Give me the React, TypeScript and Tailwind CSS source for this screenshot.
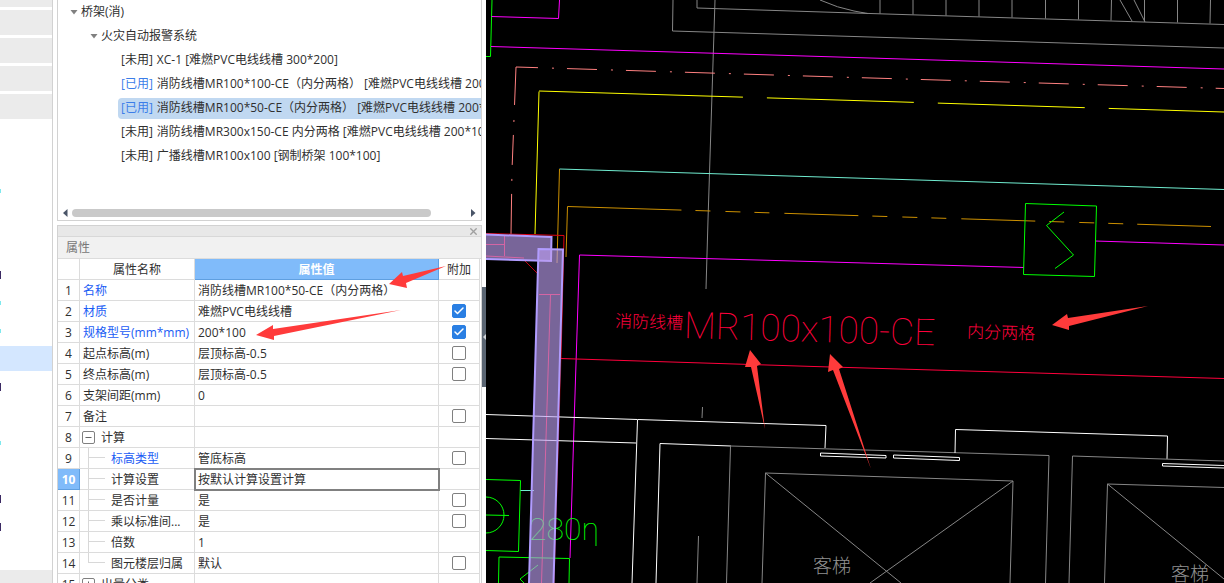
import { useState } from "react";
import { Check, Minus, Plus, X } from "lucide-react";

interface TreeLeaf {
  used: boolean;
  name: string;
}

interface PropertyRow {
  id: number;
  name: string;
  value?: string;
  link?: boolean;
  extra?: boolean;
  group?: "open" | "closed";
  child?: "middle" | "last";
}

interface Stroke {
  d: string;
  color: string;
  dash?: string;
  offset?: number;
}

const SIDE_ROWS = [
  "gray", "gray", "gray", "gray", "", "", "teal", "", "", "navy", "teal",
  "teal", "selected", "navy", "", "teal", "", "navy", "navy", "", "gray",
];

const SIDE_STYLES: Record<string, string> = {
  gray: "bg-[#ebebeb]",
  selected: "bg-[#d4e7ff]",
};

const DOT_STYLES: Record<string, string> = {
  teal: "h-1 bg-[#7fe9ee]",
  navy: "h-2 bg-[#3b2a63]",
};

const LEAVES: TreeLeaf[] = [
  { used: false, name: "XC-1 [难燃PVC电线线槽 300*200]" },
  { used: true, name: "消防线槽MR100*100-CE（内分两格） [难燃PVC电线线槽 200*100]" },
  { used: true, name: "消防线槽MR100*50-CE（内分两格） [难燃PVC电线线槽 200*100]" },
  { used: false, name: "消防线槽MR300x150-CE 内分两格 [难燃PVC电线线槽 200*100]" },
  { used: false, name: "广播线槽MR100x100 [钢制桥架 100*100]" },
];

const PROPERTIES: PropertyRow[] = [
  { id: 1, name: "名称", value: "消防线槽MR100*50-CE（内分两格）", link: true },
  { id: 2, name: "材质", value: "难燃PVC电线线槽", link: true, extra: true },
  { id: 3, name: "规格型号(mm*mm)", value: "200*100", link: true, extra: true },
  { id: 4, name: "起点标高(m)", value: "层顶标高-0.5", extra: false },
  { id: 5, name: "终点标高(m)", value: "层顶标高-0.5", extra: false },
  { id: 6, name: "支架间距(mm)", value: "0" },
  { id: 7, name: "备注", extra: false },
  { id: 8, name: "计算", group: "open" },
  { id: 9, name: "标高类型", value: "管底标高", link: true, extra: false, child: "middle" },
  { id: 10, name: "计算设置", value: "按默认计算设置计算", child: "middle" },
  { id: 11, name: "是否计量", value: "是", extra: false, child: "middle" },
  { id: 12, name: "乘以标准间...", value: "是", extra: false, child: "middle" },
  { id: 13, name: "倍数", value: "1", child: "middle" },
  { id: 14, name: "图元楼层归属", value: "默认", extra: false, child: "last" },
  { id: 15, name: "出量分类", group: "closed" },
];

const GRAY = "#868686";
const GREEN = "#00ff00";
const MAGENTA = "#ff00ff";
const CRIMSON = "#ff003c";
const ORANGE = "#cc9000";
const SALMON = "#ff8080";
const TEAL = "#70ecd0";
const WHITE = "#ffffff";

// Everything that lies under the selected tray
const BASE_STROKES: Stroke[] = [
  { d: "M673 0L672.5 31L854 36.5L1224 48", color: GRAY },
  { d: "M697 0V8L854 13L1224 24.5", color: GRAY },
  { d: "M820 0Q838 8 854 11T868 13.5", color: GRAY },
  { d: "M880 0V13.5M913 0V14.5M946 0V15.5M979 0V16.5M1012 0V17.5M1045.5 0V18.5M1078.5 0V19.5M1111.5 0L1111 20.5M1144.5 0V21.5M1177.5 0V22.5M1210.5 0L1210 23.5", color: GRAY },
  { d: "M1120 0L1132 21M1134 0L1145 22", color: GRAY },
  { d: "M715 0L708 220L706 289M702.5 407L702 418M698.5 536L697 583", color: GRAY },
  { d: "M492 0L490.5 56.5H486", color: GREEN },
  { d: "M491.5 16.5L558.5 18.5L559.5 0", color: MAGENTA },
  { d: "M491 46.5L854 57.5L1224 69", color: MAGENTA },
  { d: "M516 67L854 77.5L1224 88.5", color: SALMON, dash: "30 14 2 13", offset: 8 },
  { d: "M516 67L514.5 106L512 170L511 234", color: SALMON, dash: "38 15 2 13 30 14 2 13 60" },
  { d: "M539 91.5L535 234", color: "#ffff00" },
  { d: "M539 91L854 100.5L1224 112", color: "#ffff00", dash: "204 24 147 24 147 24 200" },
  { d: "M559.5 169L854 178L1224 189.5", color: TEAL },
  { d: "M559.5 169L557 263M567.5 206.5L566 257", color: ORANGE },
  { d: "M567.5 206.5L854 215.5L1211 226.5", color: ORANGE, dash: "114 14 15 15 15 14 15 15 74 14 15 15 15 14 15 15 74 14 15 15 15 14 15 14 74" },
  { d: "M1024 267.5L579.5 255L574.5 410L570 558M1095 241L1224 245", color: MAGENTA },
  { d: "M1025.5 203.5L1096.5 206L1094.5 276.5L1023.5 274.5Z", color: GREEN },
  { d: "M1064 212L1046.5 225.5L1073.5 255L1055 268.5", color: GREEN },
  { d: "M486 233.5L564 235.5L561 358", color: "#e00010" },
  { d: "M561 358L554 583", color: "#800010" },
  { d: "M525 261L537 273", color: "#c00010" },
  { d: "M486 244.5H504.5M504.5 236V256M486 256L524 258M539 294.5H560M550.5 294L541.5 583", color: "#ff0020" },
  { d: "M560.5 358.5L814 366.5L1224 378.5", color: CRIMSON },
  { d: "M486 414.5L637.5 419.5L826 425.5L825 448", color: WHITE },
  { d: "M486 438.5L636 443M637.5 420L632 583", color: WHITE },
  { d: "M731 446L660 443.5L656 583", color: WHITE },
  { d: "M731 446L1049 455.5L1045.5 583M730.5 446L726.5 583", color: GRAY },
  { d: "M820.5 453L886 455.5V458L820.5 456ZM893.5 455L959.5 457.5V460.5L893.5 458Z", color: WHITE },
  { d: "M762 583L765.5 473L1013 481L1010 583M765.5 473L901 583M1013 481L870 583", color: GRAY },
  { d: "M955 453L955.5 429.5L1167.5 436L1167 459", color: WHITE },
  { d: "M1224 461L1072.5 456L1069 583", color: GRAY },
  { d: "M1224 465.5L1162.5 463.5V466L1224 468", color: WHITE },
  { d: "M1224 487.5L1107.5 484L1104.5 583M1107.5 484L1224 579", color: GRAY },
  { d: "M486 479.5L520.5 480.5L518.5 551.5L486 550.5", color: GREEN },
  { d: "M486 497A18 18 0 0 1 486 533M486 515L509 515.5", color: GREEN },
  { d: "M520.5 490.5H534", color: TEAL },
  { d: "M498.5 583L499 557L569.5 558.5L569 583M538 565L520 579L524 583", color: GREEN },
];

const TRAY = [
  "M486 234.5L551.5 237L551 261L486 259",
  "M529 583L538.5 249L563 249.5L553.5 583",
];

const CANVAS_ARROWS = [
  "750,350 761,364 757,366 765,429 751,367 745,367",
  "830,354 843,367 839,369 871,469 833,370 828,372",
  "1052,325 1067,314 1068,318 1148,306 1069,326 1069,330",
];

const PANEL_ARROWS = [
  "389,284 402,272 403,276 446,266 406,283 407,288",
  "256,335 273,325 273,329 401,310 274,336 274,340",
];

export default function App() {
  return (
    <div className="relative flex h-screen min-w-0 overflow-hidden bg-white font-['Open_Sans','Noto_Sans_CJK_SC',sans-serif] text-xs text-[#2f2f2f]">
      <SideList />
      <div className="ml-1 flex w-[425px] shrink-0 flex-col">
        <ComponentTree />
        <PropertyPanel />
      </div>
      <Splitter />
      <DrawingCanvas />
      <svg className="pointer-events-none absolute inset-0 h-full w-[482px]" aria-hidden="true">
        {PANEL_ARROWS.map((points) => (
          <polygon key={points} points={points} fill="#ff3b3b" />
        ))}
      </svg>
    </div>
  );
}

function SideList() {
  return (
    <aside className="flex w-[53px] shrink-0 flex-col gap-[3px] overflow-hidden border-r border-[#d2d2d2]">
      <div className="h-[7px] shrink-0 bg-[#ebebeb]" />
      {SIDE_ROWS.map((kind, i) => (
        <div key={i} className={`flex h-[25px] shrink-0 items-center ${SIDE_STYLES[kind] ?? ""}`}>
          {DOT_STYLES[kind] && <span className={`w-px ${DOT_STYLES[kind]}`} />}
        </div>
      ))}
    </aside>
  );
}

function ComponentTree() {
  const [selected, setSelected] = useState(2);

  return (
    <section className="flex h-[221px] shrink-0 flex-col border-x border-b border-[#d2d2d2]">
      <div className="flex-1 overflow-hidden">
        <div className="flex h-6 items-center gap-[3px] pl-3">
          <Caret />
          <span>桥架(消)</span>
        </div>
        <div className="flex h-6 items-center gap-[3px] pl-8">
          <Caret />
          <span>火灾自动报警系统</span>
        </div>
        <ul>
          {LEAVES.map((leaf, i) => (
            <li key={leaf.name} className="flex h-6 items-center pl-[60px]">
              <button
                type="button"
                onClick={() => setSelected(i)}
                className={`flex h-[21px] flex-1 items-center gap-1 overflow-hidden rounded-l-sm pl-[3px] whitespace-nowrap ${selected === i ? "bg-[#c0d8f1]" : ""}`}
              >
                <span className={leaf.used ? "text-[#3b7de9]" : ""}>{leaf.used ? "[已用]" : "[未用]"}</span>
                <span>{leaf.name}</span>
              </button>
            </li>
          ))}
        </ul>
      </div>
      <div className="flex h-[15px] shrink-0 items-center px-[5px]">
        <button type="button" aria-label="向左滚动" className="w-[9px]">
          <svg width="5" height="8" aria-hidden="true"><path d="M4.5 0V8L0 4Z" fill="#4a5568" /></svg>
        </button>
        <div className="flex-1">
          <div className="h-2 w-[90%] rounded-full bg-[#c9c9c9]" />
        </div>
        <button type="button" aria-label="向右滚动" className="w-[5px]">
          <svg width="5" height="8" aria-hidden="true"><path d="M0 0V8L4.5 4Z" fill="#4a5568" /></svg>
        </button>
      </div>
    </section>
  );
}

function Caret() {
  return (
    <svg width="8" height="5" aria-hidden="true" className="shrink-0">
      <path d="M0.5 0H7.5L4 4.5Z" fill="#808080" />
    </svg>
  );
}

function PropertyPanel() {
  return (
    <section className="mt-1 flex min-h-0 flex-1 flex-col overflow-hidden border-x border-t border-[#d2d2d2]">
      <div className="flex h-[11px] shrink-0 items-center justify-end border-b border-[#d8d8d8] bg-[#e8e8e8] pr-0.5">
        <button type="button" aria-label="关闭">
          <X size={11} strokeWidth={3} color="#a0a0a0" />
        </button>
      </div>
      <h2 className="flex h-[22px] shrink-0 items-center border-b border-[#dcdcdc] bg-[#f1f1f1] pl-2 text-[#777777]">属性</h2>
      <div className="pr-px">
        <table className="w-full table-fixed border-separate border-spacing-0">
          <colgroup>
            <col className="w-[22px]" />
            <col className="w-[115px]" />
            <col />
            <col className="w-[41px]" />
          </colgroup>
          <thead>
            <tr className="h-[21px]">
              <th className="border-r border-b border-[#dcdcdc] p-0" />
              <th className="border-r border-b border-[#dcdcdc] px-0 pt-0.5 pb-0 font-normal">属性名称</th>
              <th className="border-r border-b border-[#5f9fe0] bg-[#80bbfa] px-0 pt-0.5 pb-0 font-bold text-white">属性值</th>
              <th className="border-r border-b border-[#dcdcdc] px-0 pt-0.5 pb-0 font-normal">附加</th>
            </tr>
          </thead>
          <tbody>
            {PROPERTIES.map((row) => (
              <PropertyLine key={row.id} row={row} active={row.id === 10} />
            ))}
          </tbody>
        </table>
      </div>
    </section>
  );
}

function PropertyLine({ row, active }: { row: PropertyRow; active: boolean }) {
  return (
    <tr className="h-[21px]">
      <th
        className={`border-r border-b px-0 pt-0.5 pb-0 ${active ? "border-[#5f9fe0] bg-[#80bbfa] font-bold text-white" : "border-[#dcdcdc] font-normal"}`}
      >
        {row.id}
      </th>
      <td className="border-r border-b border-[#dcdcdc] p-0">
        <div className="flex h-5 items-center overflow-hidden whitespace-nowrap">
          {row.group && (
            <button
              type="button"
              aria-label={row.group === "open" ? "折叠" : "展开"}
              className="mr-1.5 ml-0.5 flex size-[13px] items-center justify-center rounded-xs border border-[#808080]"
            >
              {row.group === "open" ? <Minus size={9} /> : <Plus size={9} />}
            </button>
          )}
          {row.child && (
            <span className="mr-1.5 ml-2 flex w-[17px] flex-col self-stretch">
              <span className="h-1/2 border-b border-l border-[#d8d8d8]" />
              <span className={`h-1/2 ${row.child === "middle" ? "border-l border-[#d8d8d8]" : ""}`} />
            </span>
          )}
          <span className={`pt-0.5 ${row.group || row.child ? "" : "pl-[3px]"} ${row.link ? "text-[#1a5cf5]" : ""}`}>
            {row.name}
          </span>
        </div>
      </td>
      <td
        className={`border-r border-b border-[#dcdcdc] pt-0.5 pr-0 pb-0 pl-[3px] whitespace-nowrap ${active ? "relative outline-2 -outline-offset-1 outline-[#808080]" : ""}`}
      >
        {row.value}
      </td>
      <td className="border-r border-b border-[#dcdcdc] p-0">
        {row.extra !== undefined && <ExtraBox label={row.name} initial={row.extra} />}
      </td>
    </tr>
  );
}

function ExtraBox({ label, initial }: { label: string; initial: boolean }) {
  const [checked, setChecked] = useState(initial);

  return (
    <label className="relative mx-auto flex size-[14px]">
      <input
        type="checkbox"
        aria-label={`附加 ${label}`}
        checked={checked}
        onChange={(e) => setChecked(e.target.checked)}
        className="size-[14px] appearance-none rounded-xs border border-[#808080] bg-white checked:border-[#2a7fe3] checked:bg-[#2a7fe3]"
      />
      {checked && <Check size={12} strokeWidth={3} color="white" className="pointer-events-none absolute inset-px" />}
    </label>
  );
}

function Splitter() {
  return (
    <div className="flex w-1 shrink-0 flex-col pt-[287px]">
      <button type="button" aria-label="收起面板" className="flex h-[100px] items-center justify-end bg-[#5a6572]">
        <svg width="3" height="6" aria-hidden="true"><path d="M3 0V6L0 3Z" fill="#d0d4d8" /></svg>
      </button>
    </div>
  );
}

function DrawingCanvas() {
  return (
    <main className="min-w-0 flex-1 bg-black">
      <svg className="block h-full w-full" role="img" aria-label="平面图">
        {/* the plan uses window coordinates, the canvas starts after the dock */}
        <g transform="translate(-486 0)" fill="none">
          {BASE_STROKES.map((s) => (
            <path key={s.d} d={s.d} stroke={s.color} strokeDasharray={s.dash} strokeDashoffset={s.offset} />
          ))}
          <g className="font-['Roboto','Noto_Sans_CJK_SC',sans-serif]">
            <g fill={CRIMSON} transform="rotate(1.7 615 330)">
              <text x="615" y="327" fontSize="17" className="font-light">消防线槽</text>
              <text x="684" y="336" fontSize="37" className="font-thin">MR100x100-CE</text>
              <text x="967" y="327" fontSize="17" className="font-light">内分两格</text>
            </g>
            <text x="529" y="540" fontSize="32" fill={GREEN} className="font-thin">280η</text>
            <g fill="#909090" fontSize="19" className="font-light">
              <text x="813" y="573">客梯</text>
              <text x="1171" y="581">客梯</text>
            </g>
          </g>
          {TRAY.map((d) => (
            <path key={d} d={d} fill="#bb9ef0" fillOpacity="0.64" stroke="#b19cff" strokeWidth="2" />
          ))}
          {CANVAS_ARROWS.map((points) => (
            <polygon key={points} points={points} fill="#ff3b3b" />
          ))}
        </g>
      </svg>
    </main>
  );
}
